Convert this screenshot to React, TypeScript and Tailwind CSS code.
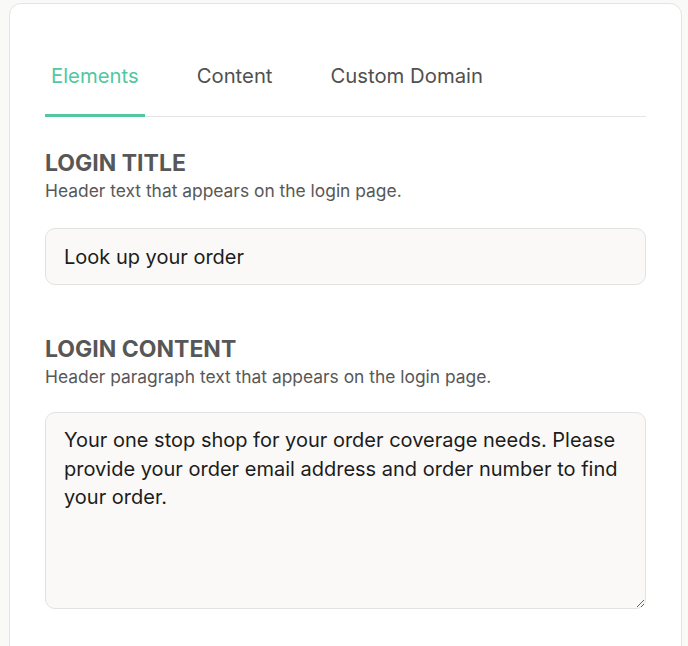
import { useState } from "react";

const TABS = ["Elements", "Content", "Custom Domain"];

function Field({
  title,
  hint,
  children,
}: {
  title: string;
  hint: string;
  children: React.ReactNode;
}) {
  return (
    <div className="flex flex-col">
      <h3 className="text-[23px] font-bold leading-[26px] text-[#575757]">
        {title}
      </h3>
      <p className="mt-[4px] text-[17.4px] leading-[22px] text-[#585858]">{hint}</p>
      <div className="mt-[26px]">{children}</div>
    </div>
  );
}

export default function App() {
  const [tab, setTab] = useState("Elements");
  const [title, setTitle] = useState("Look up your order");
  const [content, setContent] = useState(
    "Your one stop shop for your order coverage needs. Please provide your order email address and order number to find your order.",
  );

  return (
    <div
      className="min-h-screen bg-[#f9f9f7] pl-[9px] pr-[6px] pt-[3px]"
      style={{ fontFamily: "Inter, 'Noto Sans', sans-serif" }}
    >
      <div className="min-h-[700px] rounded-[12px] border border-[#e4e4e2] bg-white px-[35px] pt-[40px]">
        <div className="flex gap-[46px] border-b border-[#e5e5e5]">
          {TABS.map((t) => (
            <button
              key={t}
              onClick={() => setTab(t)}
              className={
                t === tab
                  ? "-mb-px border-b-[3px] border-[#52c7a1] px-[6px] pb-[24px] pt-[18px] text-[20.3px] leading-[28px] text-[#52c7a1]"
                  : "-mb-px border-b-[3px] border-transparent px-[6px] pb-[24px] pt-[18px] text-[20.3px] leading-[28px] text-[#505050]"
              }
            >
              {t}
            </button>
          ))}
        </div>

        <div className="mt-[33px] flex flex-col gap-[51px]">
          <Field title="LOGIN TITLE" hint="Header text that appears on the login page.">
            <input
              value={title}
              onChange={(e) => setTitle(e.target.value)}
              className="h-[57px] w-full rounded-[10px] border border-[#e2e2e0] bg-[#faf9f7] px-[18px] text-[20px] text-[#1c1c1c] outline-none"
            />
          </Field>
          <Field
            title="LOGIN CONTENT"
            hint="Header paragraph text that appears on the login page."
          >
            <textarea
              value={content}
              onChange={(e) => setContent(e.target.value)}
              className="-mt-[2px] block h-[197px] w-full rounded-[10px] border border-[#e2e2e0] bg-[#faf9f7] px-[18px] py-[13px] text-[20px] leading-[28.5px] text-[#1c1c1c] outline-none"
            />
          </Field>
        </div>
      </div>
    </div>
  );
}
